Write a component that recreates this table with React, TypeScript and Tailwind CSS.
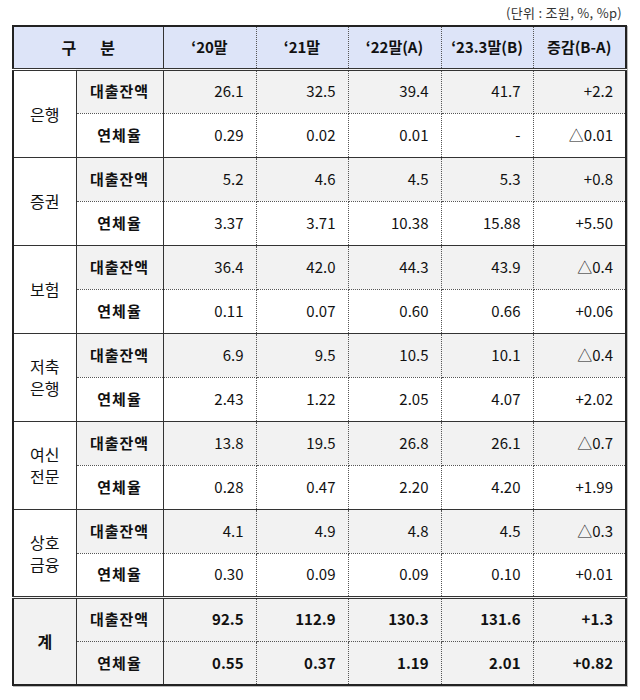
const font = { fontFamily: '"Noto Sans CJK KR", "Noto Sans", sans-serif' }

type Group = {
  name: string[]
  loan: string[]
  rate: string[]
  total?: boolean
}

const groups: Group[] = [
  { name: ['은행'], loan: ['26.1', '32.5', '39.4', '41.7', '+2.2'], rate: ['0.29', '0.02', '0.01', '-', '△0.01'] },
  { name: ['증권'], loan: ['5.2', '4.6', '4.5', '5.3', '+0.8'], rate: ['3.37', '3.71', '10.38', '15.88', '+5.50'] },
  { name: ['보험'], loan: ['36.4', '42.0', '44.3', '43.9', '△0.4'], rate: ['0.11', '0.07', '0.60', '0.66', '+0.06'] },
  { name: ['저축', '은행'], loan: ['6.9', '9.5', '10.5', '10.1', '△0.4'], rate: ['2.43', '1.22', '2.05', '4.07', '+2.02'] },
  { name: ['여신', '전문'], loan: ['13.8', '19.5', '26.8', '26.1', '△0.7'], rate: ['0.28', '0.47', '2.20', '4.20', '+1.99'] },
  { name: ['상호', '금융'], loan: ['4.1', '4.9', '4.8', '4.5', '△0.3'], rate: ['0.30', '0.09', '0.09', '0.10', '+0.01'] },
  { name: ['계'], loan: ['92.5', '112.9', '130.3', '131.6', '+1.3'], rate: ['0.55', '0.37', '1.19', '2.01', '+0.82'], total: true },
]

const headers = ['‘20말', '‘21말', '‘22말(A)', '‘23.3말(B)', '증감(B-A)']

// shared border pieces
const solidRight = 'border-r border-r-[#333]'
const dotRight = 'border-r border-r-[#555] [border-right-style:dotted]'
const dotBottom = 'border-b border-b-[#555] [border-bottom-style:dotted]'
const solidBottom = 'border-b border-b-[#333]'
const doubleTop = 'border-t-[3px] border-t-[#333] [border-top-style:double]'

export default function App() {
  return (
    <div className="h-[700px] w-[640px] bg-white text-[#111]" style={font}>
      <div className="flex h-[25px] items-start justify-end pr-[18px] pt-[5px] text-[13px] leading-[16px] tracking-[0.3px] text-[#333]">
        (단위 : 조원, %, %p)
      </div>
      <table className="ml-[12px] w-[613px] table-fixed border-collapse border-2 border-[#222] text-[15px] shadow-[1px_1px_0_#bbb]">
        <colgroup>
          <col className="w-[63px]" />
          <col className="w-[87px]" />
          <col className="w-[93px]" />
          <col className="w-[92px]" />
          <col className="w-[93px]" />
          <col className="w-[92px]" />
          <col className="w-[93px]" />
        </colgroup>
        <thead>
          <tr className="h-[43px] bg-[#dde4f8]">
            <th
              colSpan={2}
              className={`${solidRight} border-b-[3px] border-b-[#333] [border-bottom-style:double] text-center text-[16px] font-bold`}
            >
              구<span className="inline-block w-[24px]" />분
            </th>
            {headers.map((h) => (
              <th
                key={h}
                className={`${dotRight} border-b-[3px] border-b-[#333] [border-bottom-style:double] text-center font-bold`}
              >
                {h}
              </th>
            ))}
          </tr>
        </thead>
        <tbody>
          {groups.map((g, gi) => {
            const last = gi === groups.length - 1
            const topBorder = g.total ? doubleTop : ''
            const nameBottom = last ? '' : solidBottom
            return [
              <tr key={`${gi}-a`} className="h-[44px] bg-[#f2f2f2]">
                <td
                  rowSpan={2}
                  className={`${solidRight} ${nameBottom} ${topBorder} text-center text-[16px] leading-[22px] ${
                    g.total ? 'bg-[#f2f2f2] font-bold' : 'bg-white'
                  }`}
                >
                  {g.name.map((n) => (
                    <div key={n}>{n}</div>
                  ))}
                </td>
                <td className={`${solidRight} ${dotBottom} ${topBorder} text-center font-bold tracking-[1px]`}>
                  대출잔액
                </td>
                {g.loan.map((v, i) => (
                  <td
                    key={i}
                    className={`${dotRight} ${dotBottom} ${topBorder} pr-[12px] text-right ${
                      g.total ? 'font-bold' : ''
                    }`}
                  >
                    {v}
                  </td>
                ))}
              </tr>,
              <tr key={`${gi}-b`} className={`h-[44px] ${g.total ? 'bg-[#f2f2f2]' : 'bg-white'}`}>
                <td className={`${solidRight} ${nameBottom} text-center font-bold tracking-[1px]`}>연체율</td>
                {g.rate.map((v, i) => (
                  <td
                    key={i}
                    className={`${dotRight} ${nameBottom} pr-[12px] text-right ${g.total ? 'font-bold' : ''}`}
                  >
                    {v}
                  </td>
                ))}
              </tr>,
            ]
          })}
        </tbody>
      </table>
    </div>
  )
}
